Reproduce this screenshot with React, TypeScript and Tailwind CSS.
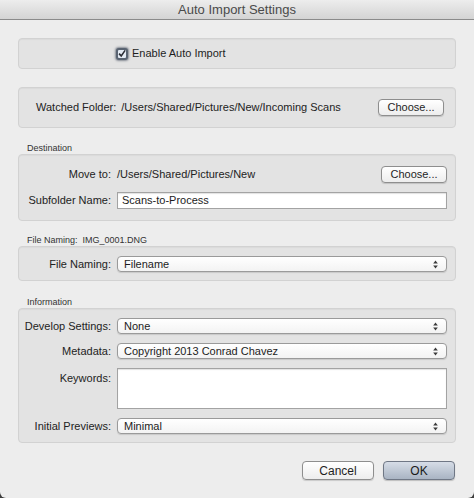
import type { ReactNode } from 'react';

const font = { fontFamily: '"Liberation Sans", Arial, sans-serif' };

function Group({ className, children }: { className: string; children: ReactNode }) {
  return (
    <div
      className={`rounded-[4px] border border-[#d2d2d2] bg-[#e3e3e3] shadow-[inset_0_1px_1px_rgba(0,0,0,0.04)] ${className}`}
    >
      {children}
    </div>
  );
}

function GroupTitle({ children, className }: { children: ReactNode; className: string }) {
  return (
    <div className={`pl-[9px] text-[9px] leading-[12px] text-[#333] ${className}`}>{children}</div>
  );
}

function PushButton({ label, className = '' }: { label: string; className?: string }) {
  return (
    <div
      className={`flex items-center justify-center rounded-[4px] border border-[#8e8e8e] bg-gradient-to-b from-white to-[#ededed] text-[11px] text-[#1f1f1f] shadow-[0_1px_1px_rgba(0,0,0,0.15)] ${className}`}
    >
      {label}
    </div>
  );
}

function Stepper() {
  return (
    <svg width="5" height="9" viewBox="0 0 5 9" className="mr-[8px] shrink-0">
      <path d="M2.5 0.5 L4.8 3.5 H0.2 Z" fill="#3a3a3a" />
      <path d="M2.5 8.5 L4.8 5.5 H0.2 Z" fill="#3a3a3a" />
    </svg>
  );
}

function PopUp({ value }: { value: string }) {
  return (
    <div className="flex h-[16px] w-[330px] items-center justify-between rounded-[4px] border border-[#9a9a9a] bg-gradient-to-b from-white to-[#f3f3f3] pl-[6px] text-[11px] leading-none text-[#1c1c1c] shadow-[0_1px_1px_rgba(0,0,0,0.12)]">
      <span>{value}</span>
      <Stepper />
    </div>
  );
}

function Label({ children, className = '' }: { children: ReactNode; className?: string }) {
  return (
    <span className={`text-right text-[11px] leading-none text-[#222] ${className}`}>{children}</span>
  );
}

export default function App() {
  return (
    <div className="h-[498px] w-[474px] bg-[#3d3d3d]" style={font}>
      <div className="flex h-full flex-col overflow-hidden rounded-b-[6px] bg-[#ededed]">
        {/* title bar */}
        <div className="flex h-[20px] shrink-0 items-center justify-center border-b border-[#8b8b8b] bg-gradient-to-b from-[#ededed] to-[#d4d4d4] text-[13px] leading-none text-[#4a4a4a]">
          Auto Import Settings
        </div>

        <div className="flex flex-col px-[18px]">
          <Group className="mt-[18px] flex h-[31px] items-center pl-[97px]">
            <span className="flex h-[12px] w-[12px] items-center justify-center rounded-[3px] border-2 border-[#5a6472] bg-[#e4ebf4] shadow-[0_0_2px_1px_rgba(60,70,85,0.55)]">
              <svg width="9" height="9" viewBox="0 0 9 9">
                <path d="M1.2 4.6 L3.6 7.2 L8 1" fill="none" stroke="#2c2f36" strokeWidth="1.8" />
              </svg>
            </span>
            <span className="ml-[4px] text-[11px] leading-none text-[#1e1e1e]">Enable Auto Import</span>
          </Group>

          <Group className="mt-[18px] flex h-[41px] items-center pl-[17px] pr-[11px]">
            <Label>Watched Folder:</Label>
            <span className="ml-[5px] text-[11px] leading-none text-[#222]">
              /Users/Shared/Pictures/New/Incoming Scans
            </span>
            <PushButton label="Choose..." className="ml-auto h-[17px] w-[66px]" />
          </Group>

          <GroupTitle className="mt-[14px]">Destination</GroupTitle>
          <Group className="grid grid-cols-[92px_1fr] items-center gap-x-[6px] gap-y-[9px] pb-[11px] pr-[11px] pt-[11px]">
            <Label>Move to:</Label>
            <div className="flex items-center">
              <span className="text-[11px] leading-none text-[#222]">/Users/Shared/Pictures/New</span>
              <PushButton label="Choose..." className="ml-auto h-[17px] w-[66px]" />
            </div>
            <Label>Subfolder Name:</Label>
            <div className="flex h-[17px] w-[330px] items-center border border-[#a3a3a3] bg-white pl-[4px] text-[11px] leading-none text-[#1c1c1c] shadow-[inset_0_1px_1px_rgba(0,0,0,0.12)]">
              Scans-to-Process
            </div>
          </Group>

          <GroupTitle className="mt-[13px]">File Naming:&nbsp; IMG_0001.DNG</GroupTitle>
          <Group className="grid grid-cols-[92px_1fr] items-center gap-x-[6px] pb-[8px] pt-[9px]">
            <Label>File Naming:</Label>
            <PopUp value="Filename" />
          </Group>

          <GroupTitle className="mt-[15px]">Information</GroupTitle>
          <Group className="grid grid-cols-[92px_1fr] items-center gap-x-[6px] gap-y-[9px] pb-[8px] pt-[9px]">
            <Label>Develop Settings:</Label>
            <PopUp value="None" />
            <Label>Metadata:</Label>
            <PopUp value="Copyright 2013 Conrad Chavez" />
            <Label className="self-start pt-[5px]">Keywords:</Label>
            <div className="h-[41px] w-[330px] border border-[#a3a3a3] bg-white shadow-[inset_0_1px_1px_rgba(0,0,0,0.12)]" />
            <Label>Initial Previews:</Label>
            <PopUp value="Minimal" />
          </Group>

          <div className="mt-[18px] flex justify-end gap-[9px] pr-[1px]">
            <PushButton label="Cancel" className="h-[19px] w-[72px] text-[12px]" />
            <div className="flex h-[19px] w-[72px] items-center justify-center rounded-[4px] border border-[#6f7785] bg-gradient-to-b from-[#d6dde7] to-[#a9b4c3] text-[12px] text-[#1a1a1a] shadow-[0_1px_1px_rgba(0,0,0,0.2)]">
              OK
            </div>
          </div>
        </div>
      </div>
    </div>
  );
}
